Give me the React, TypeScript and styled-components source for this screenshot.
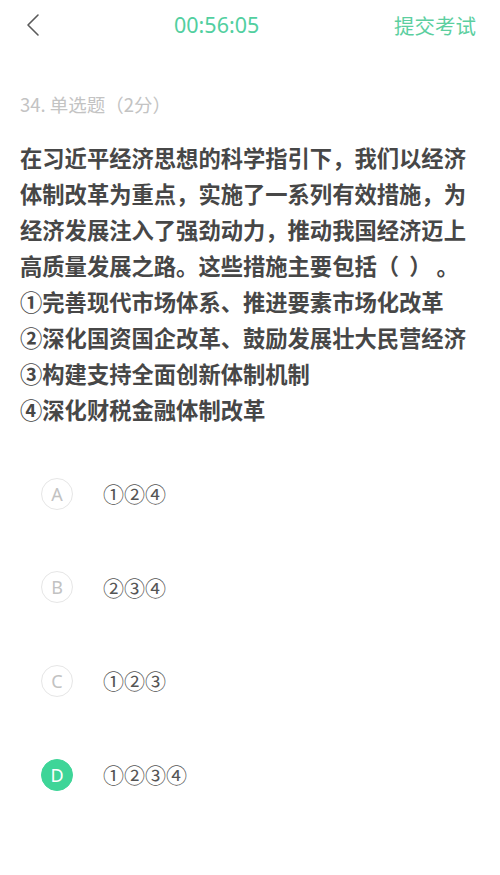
import React from "react";
import styled, { createGlobalStyle } from "styled-components";

const Global = createGlobalStyle`
  html, body { margin: 0; padding: 0; background: #ffffff; }
  body { font-family: "Noto Sans CJK SC", "Noto Sans", sans-serif; -webkit-font-smoothing: antialiased; }
`;

const Page = styled.div`
  width: 500px;
  min-height: 875px;
  background: #fff;
  box-sizing: border-box;
`;

const Header = styled.header`
  height: 50px;
  display: flex;
  align-items: center;
  padding: 0 24px 0 26px;
`;

const BackButton = styled.button`
  border: none;
  background: none;
  padding: 0;
  width: 18px;
  height: 26px;
  display: flex;
  align-items: center;
  justify-content: flex-start;
  cursor: pointer;
`;

const Timer = styled.div`
  margin-left: 130px;
  font-family: "Noto Sans", sans-serif;
  font-size: 21.5px;
  color: #52cf9f;
  line-height: 1;
`;

const Submit = styled.div`
  margin-left: auto;
  font-size: 20.5px;
  color: #5ccf9f;
  line-height: 1;
`;

const Body = styled.main`
  padding: 0 20px;
`;

const Meta = styled.div`
  margin-top: 42px;
  font-size: 18.5px;
  line-height: 24px;
  color: #c3c3c3;
`;

const Stem = styled.div`
  margin-top: 23px;
  font-size: 22.3px;
  line-height: 36px;
  font-weight: 700;
  color: #474747;
`;

const Line = styled.div`
  white-space: pre;
`;

const Options = styled.ul`
  list-style: none;
  margin: 20px 0 0;
  padding: 0 0 0 21px;
  display: flex;
  flex-direction: column;
`;

const Option = styled.li`
  height: 93.6px;
  display: flex;
  align-items: center;
  gap: 30px;
`;

const Badge = styled.span<{ $active?: boolean }>`
  width: 32px;
  height: 32px;
  box-sizing: border-box;
  border-radius: 50%;
  display: flex;
  align-items: center;
  justify-content: center;
  font-family: "Noto Sans", sans-serif;
  font-size: 18px;
  line-height: 1;
  border: 1px solid ${(p) => (p.$active ? "#3ed598" : "#e6e6e6")};
  background: ${(p) => (p.$active ? "#3ed598" : "#fff")};
  color: ${(p) => (p.$active ? "#fff" : "#c2c2c2")};
`;

const OptionText = styled.span`
  font-size: 21px;
  line-height: 1;
  color: #555;
`;

const stem = [
  "在习近平经济思想的科学指引下，我们以经济",
  "体制改革为重点，实施了一系列有效措施，为",
  "经济发展注入了强劲动力，推动我国经济迈上",
  "高质量发展之路。这些措施主要包括（  ） 。",
  "①完善现代市场体系、推进要素市场化改革",
  "②深化国资国企改革、鼓励发展壮大民营经济",
  "③构建支持全面创新体制机制",
  "④深化财税金融体制改革",
];

const options = [
  { key: "A", text: "①②④" },
  { key: "B", text: "②③④" },
  { key: "C", text: "①②③" },
  { key: "D", text: "①②③④", active: true },
];

export default function App() {
  return (
    <Page>
      <Global />
      <Header>
        <BackButton aria-label="返回">
          <svg width="14" height="24" viewBox="0 0 14 24" fill="none">
            <path d="M12 2 L2 12 L12 22" stroke="#5a5a5a" strokeWidth="1.6" strokeLinecap="round" strokeLinejoin="round" />
          </svg>
        </BackButton>
        <Timer>00:56:05</Timer>
        <Submit>提交考试</Submit>
      </Header>
      <Body>
        <Meta>34. 单选题（2分）</Meta>
        <Stem>
          {stem.map((l, i) => (
            <Line key={i}>{l}</Line>
          ))}
        </Stem>
        <Options>
          {options.map((o) => (
            <Option key={o.key}>
              <Badge $active={o.active}>{o.key}</Badge>
              <OptionText>{o.text}</OptionText>
            </Option>
          ))}
        </Options>
      </Body>
    </Page>
  );
}
